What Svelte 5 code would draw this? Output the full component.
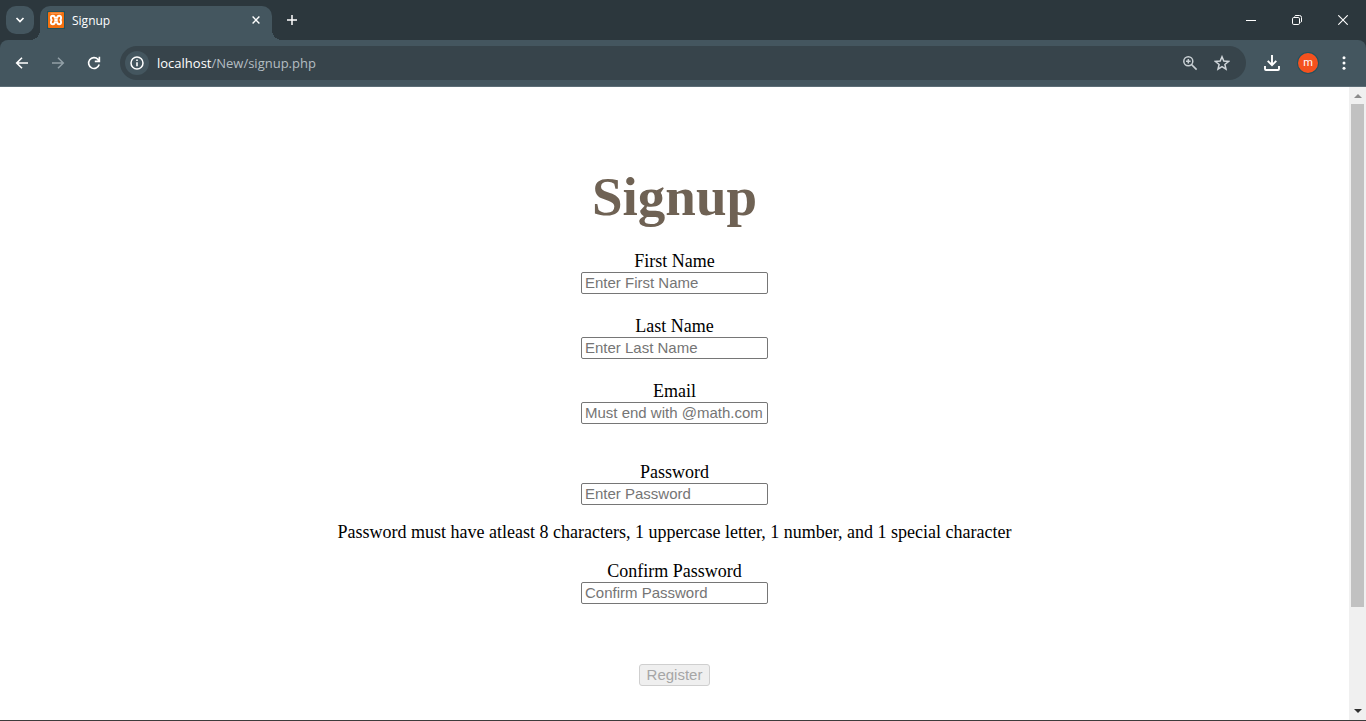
<script>
  let first = $state('');
  let last = $state('');
  let email = $state('');
  let password = $state('');
  let confirm = $state('');
</script>

<div class="window">
  <header>
    <div class="tabstrip">
      <button class="search-tabs" aria-label="Search tabs">
        <svg width="10" height="6" viewBox="0 0 10 6"><path d="M1.500 1 5 4.500 8.500 1" fill="none" stroke="#fff" stroke-width="1.700" /></svg>
      </button>
      <div class="tab">
        <svg class="favicon" width="16" height="16" viewBox="0 0 16 16">
          <rect x="0" y="0" width="16" height="16" rx="1" fill="#f4700f" />
          <path d="M2.500 1.200h11" stroke="#fbb27c" stroke-width=".8" />
          <path d="M8 5.800H6.700Q6.700 3.800 4.900 3.800 2.900 3.800 2.900 5.800 2.900 7.300 3.700 8 2.900 8.700 2.900 10.200 2.900 12.200 4.900 12.200 6.700 12.200 6.700 10.200H9.300Q9.300 12.200 11.100 12.200 13.100 12.200 13.100 10.200 13.100 8.700 12.300 8 13.100 7.300 13.100 5.800 13.100 3.800 11.100 3.800 9.300 3.800 9.300 5.800ZM6.300 8h3.400" fill="none" stroke="#fff" stroke-width="1.900" stroke-linejoin="round" />
        </svg>
        <span class="title">Signup</span>
        <button class="plain" aria-label="Close tab">
          <svg width="8" height="8" viewBox="0 0 8 8"><path d="m.6.6 6.800 6.800m0-6.800L.6 7.400" stroke="#fff" stroke-width="1.400" /></svg>
        </button>
      </div>
      <button class="plain new-tab" aria-label="New tab">
        <svg width="12" height="12" viewBox="0 0 12 12"><path d="M6 1v10M1 6h10" stroke="#fff" stroke-width="1.500" /></svg>
      </button>
      <div class="controls">
        <button class="plain" aria-label="Minimize">
          <svg width="10" height="10" viewBox="0 0 10 10"><path d="M0 5.500h10" stroke="#fff" /></svg>
        </button>
        <button class="plain" aria-label="Restore">
          <svg width="10" height="10" viewBox="0 0 10 10" fill="none" stroke="#fff"><rect x=".5" y="2.500" width="7" height="7" rx="1.300" /><path d="M2.500 1.500Q2.800.5 4 .5h3.500q2 0 2 2V6q0 1.200-1 1.500" /></svg>
        </button>
        <button class="plain" aria-label="Close">
          <svg width="10" height="10" viewBox="0 0 10 10"><path d="m.3.3 9.400 9.400m0-9.400L.3 9.700" stroke="#fff" stroke-width="1.100" /></svg>
        </button>
      </div>
    </div>

    <nav class="toolbar" aria-label="Browser">
      <button class="plain tool" aria-label="Back">
        <svg width="14" height="14" viewBox="0 0 14 14" fill="none" stroke="#fff" stroke-width="1.600"><path d="M13 7H2M7 1.700 1.700 7 7 12.300" /></svg>
      </button>
      <button class="plain tool" aria-label="Forward">
        <svg width="14" height="14" viewBox="0 0 14 14" fill="none" stroke="#92a0a7" stroke-width="1.500"><path d="M1 7h11M7 1.700 12.300 7 7 12.300" /></svg>
      </button>
      <button class="plain tool" aria-label="Reload">
        <svg width="14" height="14" viewBox="0 0 14 14" fill="none" stroke="#fff" stroke-width="1.600"><path d="M12.200 8.600A5.400 5.400 0 1 1 11 3.400L12.300 5M12.400.8v4.600H7.800" /></svg>
      </button>
      <div class="address">
        <button class="info" aria-label="Site information">
          <svg width="14" height="14" viewBox="0 0 14 14"><circle cx="7" cy="7" r="6" fill="none" stroke="#fff" stroke-width="1.500" /><path d="M7 6.200v4M7 3.500v1.600" stroke="#fff" stroke-width="1.600" /></svg>
        </button>
        <span class="url"><b>localhost</b>/New/signup.php</span>
        <button class="plain tool" aria-label="Zoom">
          <svg width="16" height="16" viewBox="0 0 16 16" fill="none" stroke="#c9d0d4" stroke-width="1.500"><circle cx="6.300" cy="6.300" r="4.500" /><path d="m9.600 9.600 5 5M6.300 4v4.600M4 6.300h4.600" /></svg>
        </button>
        <button class="plain tool" aria-label="Bookmark this page">
          <svg width="16" height="16" viewBox="0 0 16 16" fill="none" stroke="#d0d6da" stroke-width="1.500"><path d="m8 1.800 1.800 4.300 4.700.4-3.600 3 1.100 4.600L8 11.700l-4 2.400 1.100-4.600-3.600-3 4.700-.4Z" /></svg>
        </button>
      </div>
      <button class="plain tool" aria-label="Downloads">
        <svg width="16" height="16" viewBox="0 0 16 16" fill="none" stroke="#fff" stroke-width="1.900"><path d="M8 0v9.500M3.700 5.800 8 10.100l4.300-4.300M1 11v3q0 1 1 1h12q1 0 1-1v-3" /></svg>
      </button>
      <button class="plain tool" aria-label="Profile"><span class="avatar">m</span></button>
      <button class="plain tool" aria-label="Menu">
        <svg width="4" height="16" viewBox="0 0 4 16" fill="#fff"><circle cx="2" cy="2.700" r="1.500" /><circle cx="2" cy="8" r="1.500" /><circle cx="2" cy="13.300" r="1.500" /></svg>
      </button>
    </nav>
  </header>

  <div class="viewport">
    <main>
      <h1>Signup</h1>
      <form>
        <div class="field">
          <label for="first">First Name</label>
          <input id="first" type="text" placeholder="Enter First Name" bind:value={first} />
        </div>
        <div class="field">
          <label for="last">Last Name</label>
          <input id="last" type="text" placeholder="Enter Last Name" bind:value={last} />
        </div>
        <div class="field spaced">
          <label for="email">Email</label>
          <input id="email" type="email" placeholder="Must end with @math.com" bind:value={email} />
        </div>
        <div class="field">
          <label for="password">Password</label>
          <input id="password" type="password" placeholder="Enter Password" bind:value={password} />
        </div>
        <p>Password must have atleast 8 characters, 1 uppercase letter, 1 number, and 1 special character</p>
        <div class="field">
          <label for="confirm">Confirm Password</label>
          <input id="confirm" type="password" placeholder="Confirm Password" bind:value={confirm} />
        </div>
        <button class="register" type="submit" disabled>Register</button>
      </form>
    </main>
    <div class="scrollbar" aria-hidden="true">
      <svg width="17" height="17" viewBox="0 0 17 17"><path d="M5 11h8L9 7Z" fill="#8b8b8b" /></svg>
      <div class="track"><div class="thumb"></div></div>
      <svg width="17" height="17" viewBox="0 0 17 17"><path d="M5 6h8L9 10Z" fill="#303030" /></svg>
    </div>
  </div>
</div>

<style>
  :global(body) {
    margin: 0;
    background: #fff;
  }
  .window {
    display: flex;
    flex-direction: column;
    box-sizing: border-box;
    min-height: 100vh;
    border-bottom: 1px solid #3c3c3c;
  }
  header {
    background: #2c373d;
    color: #fff;
    font-family: "Open Sans", "Noto Sans", sans-serif;
    font-size: 12px;
  }
  header svg {
    display: block;
  }
  header button {
    border: 0;
    padding: 0;
    color: inherit;
    font: inherit;
    display: grid;
    place-items: center;
  }
  .plain {
    background: none;
  }
  .tabstrip {
    display: flex;
    align-items: center;
    height: 40px;
  }
  .search-tabs {
    width: 28px;
    height: 28px;
    margin: 0 6px;
    border-radius: 10px;
    background: #44565f;
  }
  .tab {
    position: relative;
    align-self: flex-end;
    display: flex;
    align-items: center;
    gap: 8px;
    box-sizing: border-box;
    width: 232px;
    height: 34px;
    padding: 0 12px 6px 8px;
    border-radius: 10px 10px 0 0;
    background: #44565f;
  }
  .favicon {
    box-shadow: 0 0 0 1px #20525f;
  }
  .tab::before,
  .tab::after {
    content: "";
    position: absolute;
    bottom: 0;
    width: 10px;
    height: 10px;
  }
  .tab::before {
    right: 100%;
    background: radial-gradient(circle at 0 0, transparent 10px, #44565f 10px);
  }
  .tab::after {
    left: 100%;
    background: radial-gradient(circle at 100% 0, transparent 10px, #44565f 10px);
  }
  .title {
    flex: 1;
  }
  .new-tab {
    width: 40px;
    height: 28px;
  }
  .controls {
    display: flex;
    margin-left: auto;
  }
  .controls button {
    width: 46px;
    height: 40px;
  }
  .toolbar {
    display: flex;
    align-items: center;
    gap: 8px;
    box-sizing: border-box;
    height: 47px;
    padding: 0 8px;
    border-bottom: 1px solid #5c6d76;
    border-radius: 8px 8px 0 0;
    background: #44565f;
  }
  .tool {
    width: 28px;
    height: 28px;
  }
  .address {
    flex: 1;
    display: flex;
    align-items: center;
    gap: 4px;
    margin: 0 4px;
    height: 34px;
    padding: 0 10px 0 5px;
    border-radius: 17px;
    background: #37444b;
  }
  .info {
    width: 24px;
    height: 24px;
    border-radius: 50%;
    background: #44565f;
  }
  .url {
    flex: 1;
    padding-left: 4px;
    color: #b4bdc2;
    font-size: 13px;
  }
  .url b {
    color: #fff;
    font-weight: 400;
  }
  .avatar {
    width: 20px;
    height: 20px;
    border-radius: 50%;
    background: #f4511e;
    box-shadow: 0 0 0 1px #20525f;
    font-family: Roboto, sans-serif;
    font-size: 11px;
    line-height: 19px;
    text-align: center;
  }
  .viewport {
    flex: 1;
    display: flex;
  }
  main {
    flex: 1;
    padding: 78px 8px 24px;
    color: #000;
    font-family: "Liberation Serif", "Times New Roman", serif;
    font-size: 18px;
    line-height: 20px;
    text-align: center;
  }
  h1 {
    margin: 0 0 22px;
    color: #6f6254;
    font-size: 55px;
    line-height: 64px;
  }
  form {
    display: flex;
    flex-direction: column;
    align-items: center;
  }
  .field {
    display: flex;
    flex-direction: column;
    align-items: center;
    gap: 1px;
    margin-bottom: 22px;
  }
  .spaced {
    margin-bottom: 38px;
  }
  .field input {
    box-sizing: border-box;
    width: 187px;
    height: 22px;
    padding: 0 3px 1px;
    border: 1px solid #767676;
    border-radius: 2px;
    background: #fff;
    font: 15px "Liberation Sans", Arial, sans-serif;
  }
  .field input::placeholder {
    color: #757575;
  }
  p {
    margin: -5px 0 19px;
  }
  .register {
    margin-top: 38px;
    box-sizing: border-box;
    height: 22px;
    padding: 0 7px 1px;
    border: 1px solid #cfcfcf;
    border-radius: 3px;
    background: #efefef;
    color: #a6a6a6;
    font: 15px "Liberation Sans", Arial, sans-serif;
  }
  .scrollbar {
    display: flex;
    flex-direction: column;
    width: 17px;
    background: #f0f0f0;
  }
  .scrollbar svg {
    display: block;
  }
  .track {
    flex: 1;
    padding: 0 2px;
  }
  .thumb {
    height: 84%;
    background: #c1c1c1;
  }
</style>
